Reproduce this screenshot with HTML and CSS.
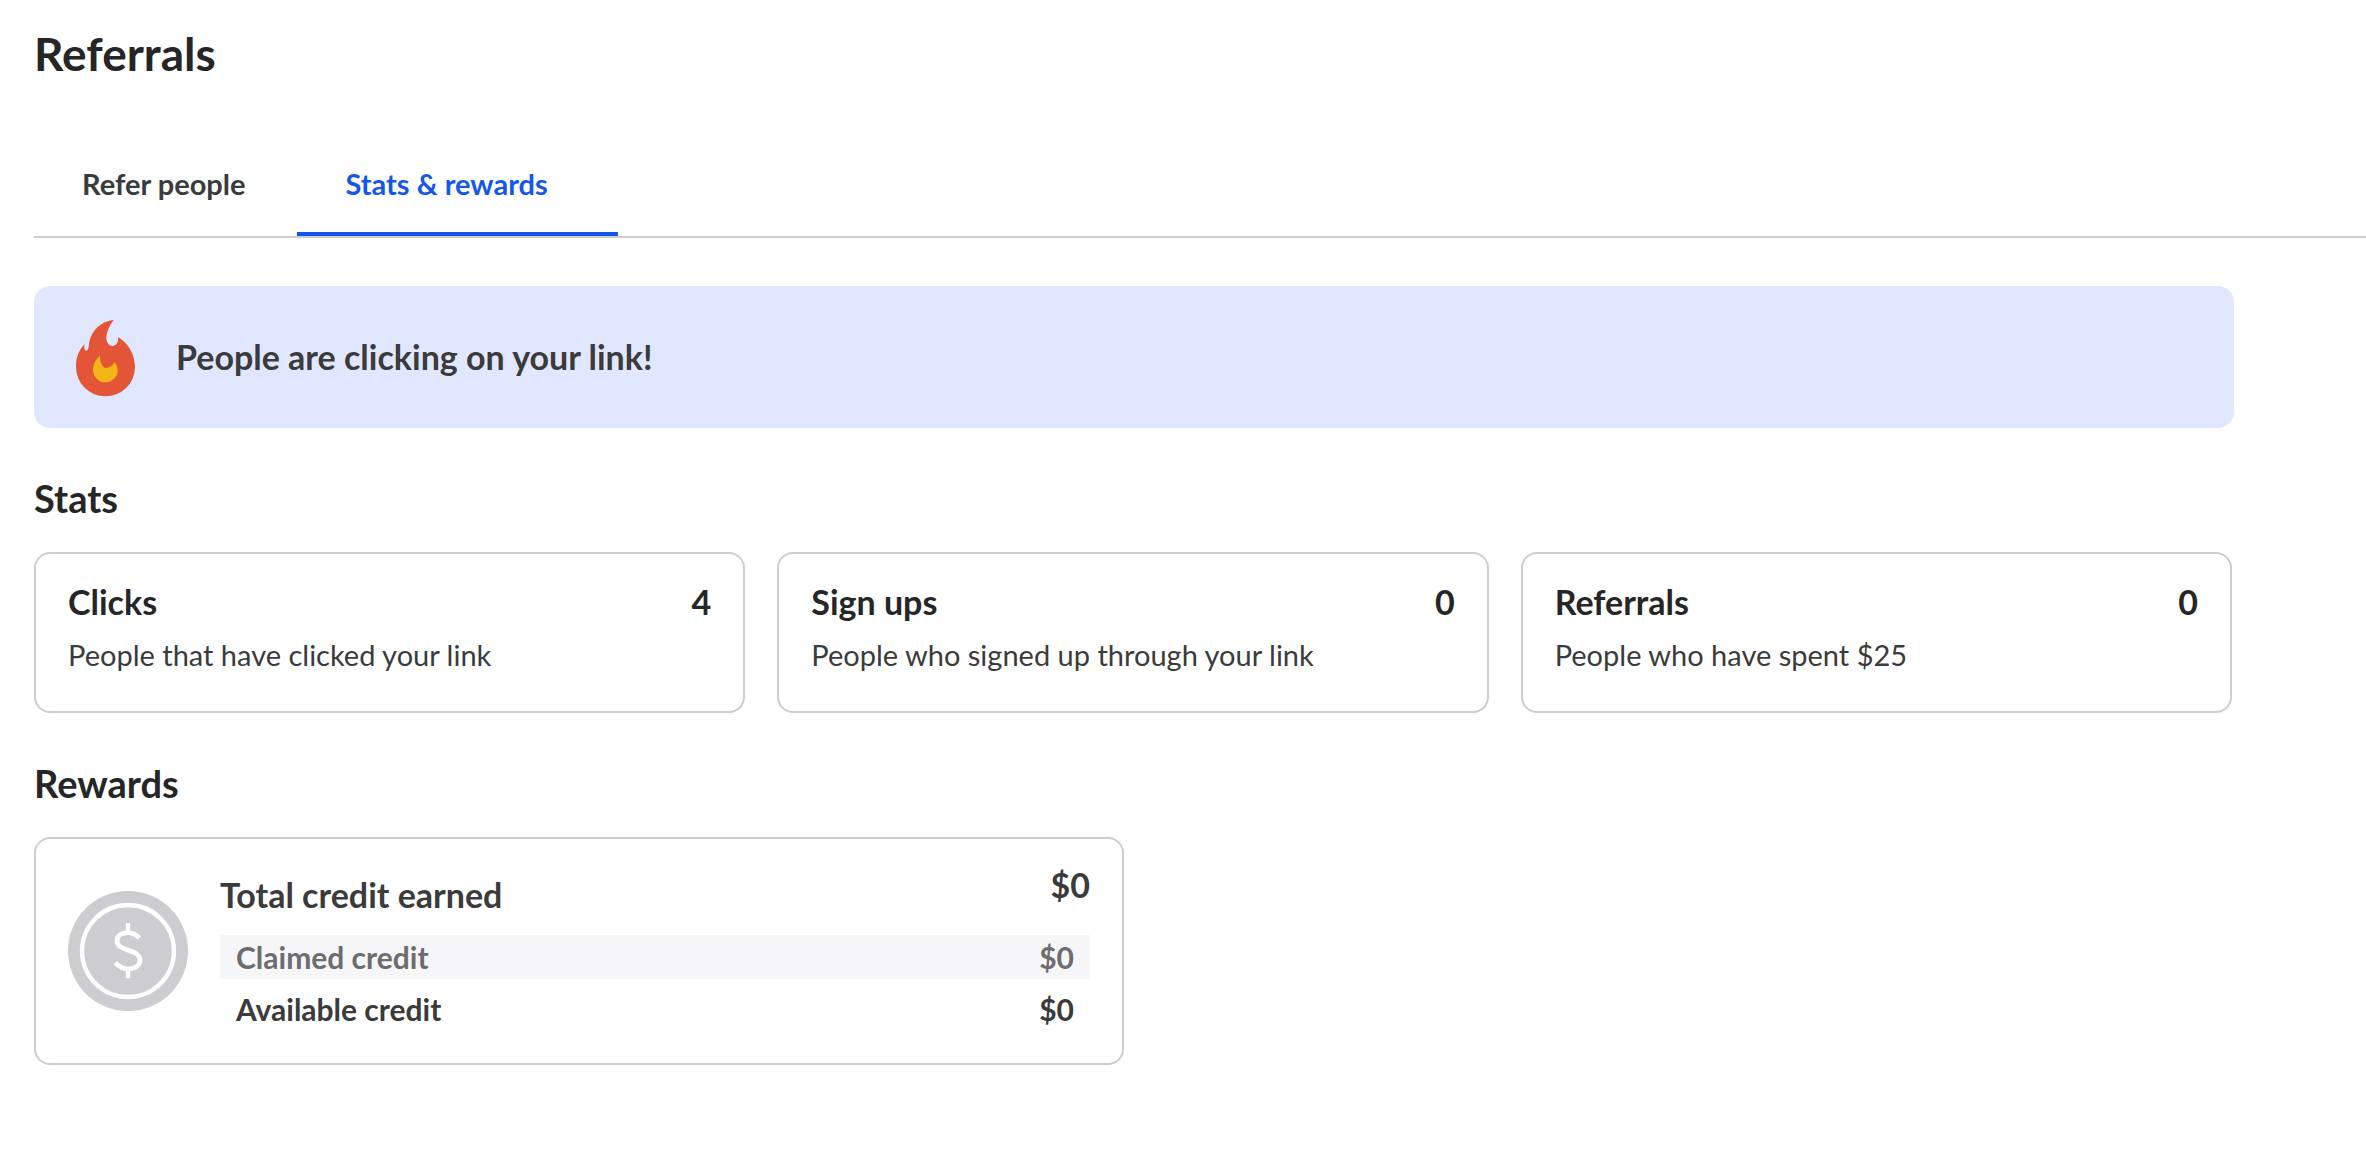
FILE: index.html
```html
<!DOCTYPE html>
<html lang="en">
<head>
   <meta charset="UTF-8">
   <meta name="viewport" content="width=device-width, initial-scale=1.0">
   <title>Referrals</title>
   <link rel="stylesheet" href="styles.css">
</head>
<body class="body">
   <h1 class="page-title">Referrals</h1>

   <nav class="tabs">
      <button class="tab" type="button">Refer people</button>
      <button class="tab active" type="button">Stats &amp; rewards</button>
   </nav>

   <main class="content">
      <div class="banner">
         <svg class="banner-icon" viewBox="18 36 240 240" aria-hidden="true">
            <path fill="#e45436" d="M161 45C148 62 139 82 139 100C140 132 179 130 174 97C205 113 225 150 225 187A88.500 88 0 0 1 48 185C48 158 57 134 74 117C71 127 74 137 79 137C85 137 86 128 87 118C92 80 120 49 161 45Z"/>
            <path fill="#f3b515" d="M120 152C119 168 127 188 138 189C148 189 158 182 164 172C169 179 173 186 173 195A37 37 0 0 1 99 195C99 178 107 163 120 152Z"/>
         </svg>
         <p class="banner-text">People are clicking on your link!</p>
      </div>

      <h2 class="section-title">Stats</h2>
      <section class="stats">
         <div class="card">
            <div class="card-head">
               <h3>Clicks</h3>
               <span>4</span>
            </div>
            <p class="card-text">People that have clicked your link</p>
         </div>
         <div class="card">
            <div class="card-head">
               <h3>Sign ups</h3>
               <span>0</span>
            </div>
            <p class="card-text">People who signed up through your link</p>
         </div>
         <div class="card">
            <div class="card-head">
               <h3>Referrals</h3>
               <span>0</span>
            </div>
            <p class="card-text">People who have spent $25</p>
         </div>
      </section>

      <h2 class="section-title">Rewards</h2>
      <section class="rewards">
         <svg class="coin" viewBox="24 32 360 360" aria-hidden="true">
            <circle cx="204" cy="212" r="180" fill="#cdcdd0"/>
            <g fill="none" stroke="#fff" stroke-width="13">
               <circle cx="204" cy="212" r="138"/>
               <path d="M204 128V155M204 266V294"/>
               <path stroke-width="14" d="M238 173C228 162 216 157 204 157C184 157 171 167 171 182C171 198 186 204 205 210C227 217 240 223 240 240C240 256 225 266 205 266C190 266 177 259 166 247"/>
            </g>
         </svg>
         <div class="rewards-body">
            <div class="rewards-head">
               <h3>Total credit earned</h3>
               <span class="rewards-total">$0</span>
            </div>
            <div class="credit credit-claimed">
               <span>Claimed credit</span>
               <span>$0</span>
            </div>
            <div class="credit">
               <span>Available credit</span>
               <span>$0</span>
            </div>
         </div>
      </section>
   </main>
</body>
</html>
```

FILE: styles.css
```css
:root {
   --color-heading: #262627;
   --color-text: #3b3b3c;
   --color-muted: #6d6d6f;
   --color-primary: #1557e8;
   --color-border: #cdcdcd;

   --background-info: #e0e7ff;
   --background-row: #f6f6f9;
}

* { box-sizing: border-box; }
h1, h2, h3, p { font-weight: 700; margin: 0; }

.body { background-color: white; color: var(--color-text); font-family: Lato, "Open Sans", sans-serif; font-size: 29px; line-height: 40px; margin: 0; padding: 28px 0 48px 34px; }

.page-title { color: var(--color-heading); font-size: 46px; line-height: 52px; margin-bottom: 60px; }

.tabs { border-bottom: 2px solid var(--color-border); display: flex; gap: 4px; margin-bottom: 48px; }
.tab { background: none; border: none; border-bottom: 4px solid transparent; color: inherit; cursor: pointer; font: inherit; font-weight: 700; padding: 24px 48px 28px; }
.tab.active { border-color: var(--color-primary); color: var(--color-primary); padding-right: 70px; }

.content { max-width: 2200px; }

.banner { align-items: center; background-color: var(--background-info); border-radius: 16px; display: flex; gap: 30px; padding: 31px 32px; }
.banner-icon { flex: none; height: 80px; width: 80px; }
.banner-text { font-size: 34px; }

.section-title { color: var(--color-heading); font-size: 38px; line-height: 48px; margin: 46px 0 30px; }

.stats { display: grid; gap: 32px; grid-template-columns: repeat(3, 1fr); padding-right: 2px; }
.card { border: 2px solid var(--color-border); border-radius: 16px; padding: 24px 32px 36px; }
.card-head { color: var(--color-heading); display: flex; font-size: 34px; font-weight: 700; justify-content: space-between; line-height: 48px; margin-bottom: 9px; }
.card-head h3 { font-size: 34px; }
.card-text { font-weight: 400; }

.rewards { align-items: center; border: 2px solid var(--color-border); border-radius: 16px; display: flex; gap: 32px; max-width: 1090px; padding: 32px; }
.coin { flex: none; height: 120px; width: 120px; }
.rewards-body { flex: 1; font-weight: 700; }
.rewards-head { display: flex; font-size: 34px; justify-content: space-between; margin-bottom: 16px; }
.rewards-head h3 { font-size: 34px; line-height: 48px; }
.rewards-total { line-height: 28px; }
.credit { display: flex; font-size: 30px; justify-content: space-between; line-height: 44px; padding: 0 16px; }
.credit-claimed { background-color: var(--background-row); color: var(--color-muted); margin-bottom: 8px; }
```
